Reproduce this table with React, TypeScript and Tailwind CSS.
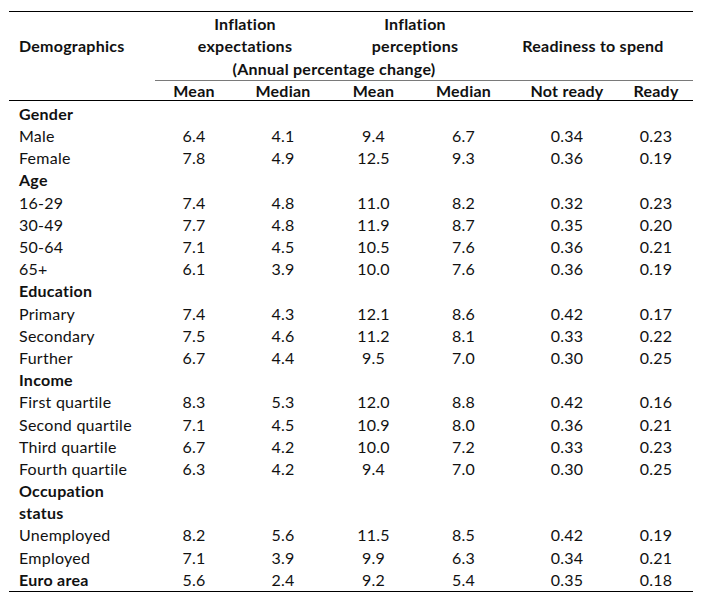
import React from "react";

type Row =
  | { kind: "head"; label: string }
  | { kind: "data"; label: string; v: string[]; bold?: boolean };

const rows: Row[] = [
  { kind: "head", label: "Gender" },
  { kind: "data", label: "Male", v: ["6.4", "4.1", "9.4", "6.7", "0.34", "0.23"] },
  { kind: "data", label: "Female", v: ["7.8", "4.9", "12.5", "9.3", "0.36", "0.19"] },
  { kind: "head", label: "Age" },
  { kind: "data", label: "16-29", v: ["7.4", "4.8", "11.0", "8.2", "0.32", "0.23"] },
  { kind: "data", label: "30-49", v: ["7.7", "4.8", "11.9", "8.7", "0.35", "0.20"] },
  { kind: "data", label: "50-64", v: ["7.1", "4.5", "10.5", "7.6", "0.36", "0.21"] },
  { kind: "data", label: "65+", v: ["6.1", "3.9", "10.0", "7.6", "0.36", "0.19"] },
  { kind: "head", label: "Education" },
  { kind: "data", label: "Primary", v: ["7.4", "4.3", "12.1", "8.6", "0.42", "0.17"] },
  { kind: "data", label: "Secondary", v: ["7.5", "4.6", "11.2", "8.1", "0.33", "0.22"] },
  { kind: "data", label: "Further", v: ["6.7", "4.4", "9.5", "7.0", "0.30", "0.25"] },
  { kind: "head", label: "Income" },
  { kind: "data", label: "First quartile", v: ["8.3", "5.3", "12.0", "8.8", "0.42", "0.16"] },
  { kind: "data", label: "Second quartile", v: ["7.1", "4.5", "10.9", "8.0", "0.36", "0.21"] },
  { kind: "data", label: "Third quartile", v: ["6.7", "4.2", "10.0", "7.2", "0.33", "0.23"] },
  { kind: "data", label: "Fourth quartile", v: ["6.3", "4.2", "9.4", "7.0", "0.30", "0.25"] },
  { kind: "head", label: "Occupation" },
  { kind: "head", label: "status" },
  { kind: "data", label: "Unemployed", v: ["8.2", "5.6", "11.5", "8.5", "0.42", "0.19"] },
  { kind: "data", label: "Employed", v: ["7.1", "3.9", "9.9", "6.3", "0.34", "0.21"] },
  { kind: "data", label: "Euro area", v: ["5.6", "2.4", "9.2", "5.4", "0.35", "0.18"], bold: true },
];

const cols = "grid grid-cols-[141px_88px_90px_91px_89px_118px_60px_7px]";

export default function App() {
  return (
    <div
      className="w-[707px] h-[600px] bg-white text-[#111] text-[16px] tracking-[0.25px] overflow-hidden"
      style={{ fontFamily: "Lato, 'Open Sans', sans-serif" }}
    >
      <div className="ml-[9px] mt-[11px] w-[684px]">
        <div className="border-t border-black" />
        {/* Header block */}
        <div className="flex">
          <div className="w-[146px] pl-[10px] pt-[1px] font-bold">
            <div className="h-[22.3px]" />
            <div className="leading-[22.3px]">Demographics</div>
          </div>
          <div className="w-[538px] border-b border-[#7a7a7a] pt-[1px] font-bold">
            <div className="flex">
              <div className="w-[180px] text-center leading-[22.3px]">
                <div>Inflation</div>
                <div>expectations</div>
              </div>
              <div className="w-[160px] text-center leading-[22.3px]">
                <div>Inflation</div>
                <div>perceptions</div>
              </div>
              <div className="w-[196px] text-center leading-[22.3px]">
                <div className="h-[22.3px]" />
                <div>Readiness to spend</div>
              </div>
            </div>
            <div className="w-[358px] text-center leading-[22.3px]">
              (Annual percentage change)
            </div>
          </div>
        </div>
        {/* Sub header */}
        <div className={`${cols} h-[20px] leading-[20px] font-bold border-b border-black`}>
          <div />
          <div className="text-center">Mean</div>
          <div className="text-center">Median</div>
          <div className="text-center">Mean</div>
          <div className="text-center">Median</div>
          <div className="text-center">Not ready</div>
          <div className="text-center">Ready</div>
          <div />
        </div>
        {/* Body */}
        <div className="pt-[2px] border-b border-black">
          {rows.map((r, i) =>
            r.kind === "head" ? (
              <div key={i} className="h-[22.2px] leading-[22.2px] pl-[10px] font-bold">
                {r.label}
              </div>
            ) : (
              <div key={i} className={`${cols} h-[22.2px] leading-[22.2px]`}>
                <div className={`pl-[10px] whitespace-nowrap ${r.bold ? "font-bold" : ""}`}>{r.label}</div>
                {r.v.map((x, j) => (
                  <div key={j} className="text-center">
                    {x}
                  </div>
                ))}
                <div />
              </div>
            )
          )}
        </div>
      </div>
    </div>
  );
}
